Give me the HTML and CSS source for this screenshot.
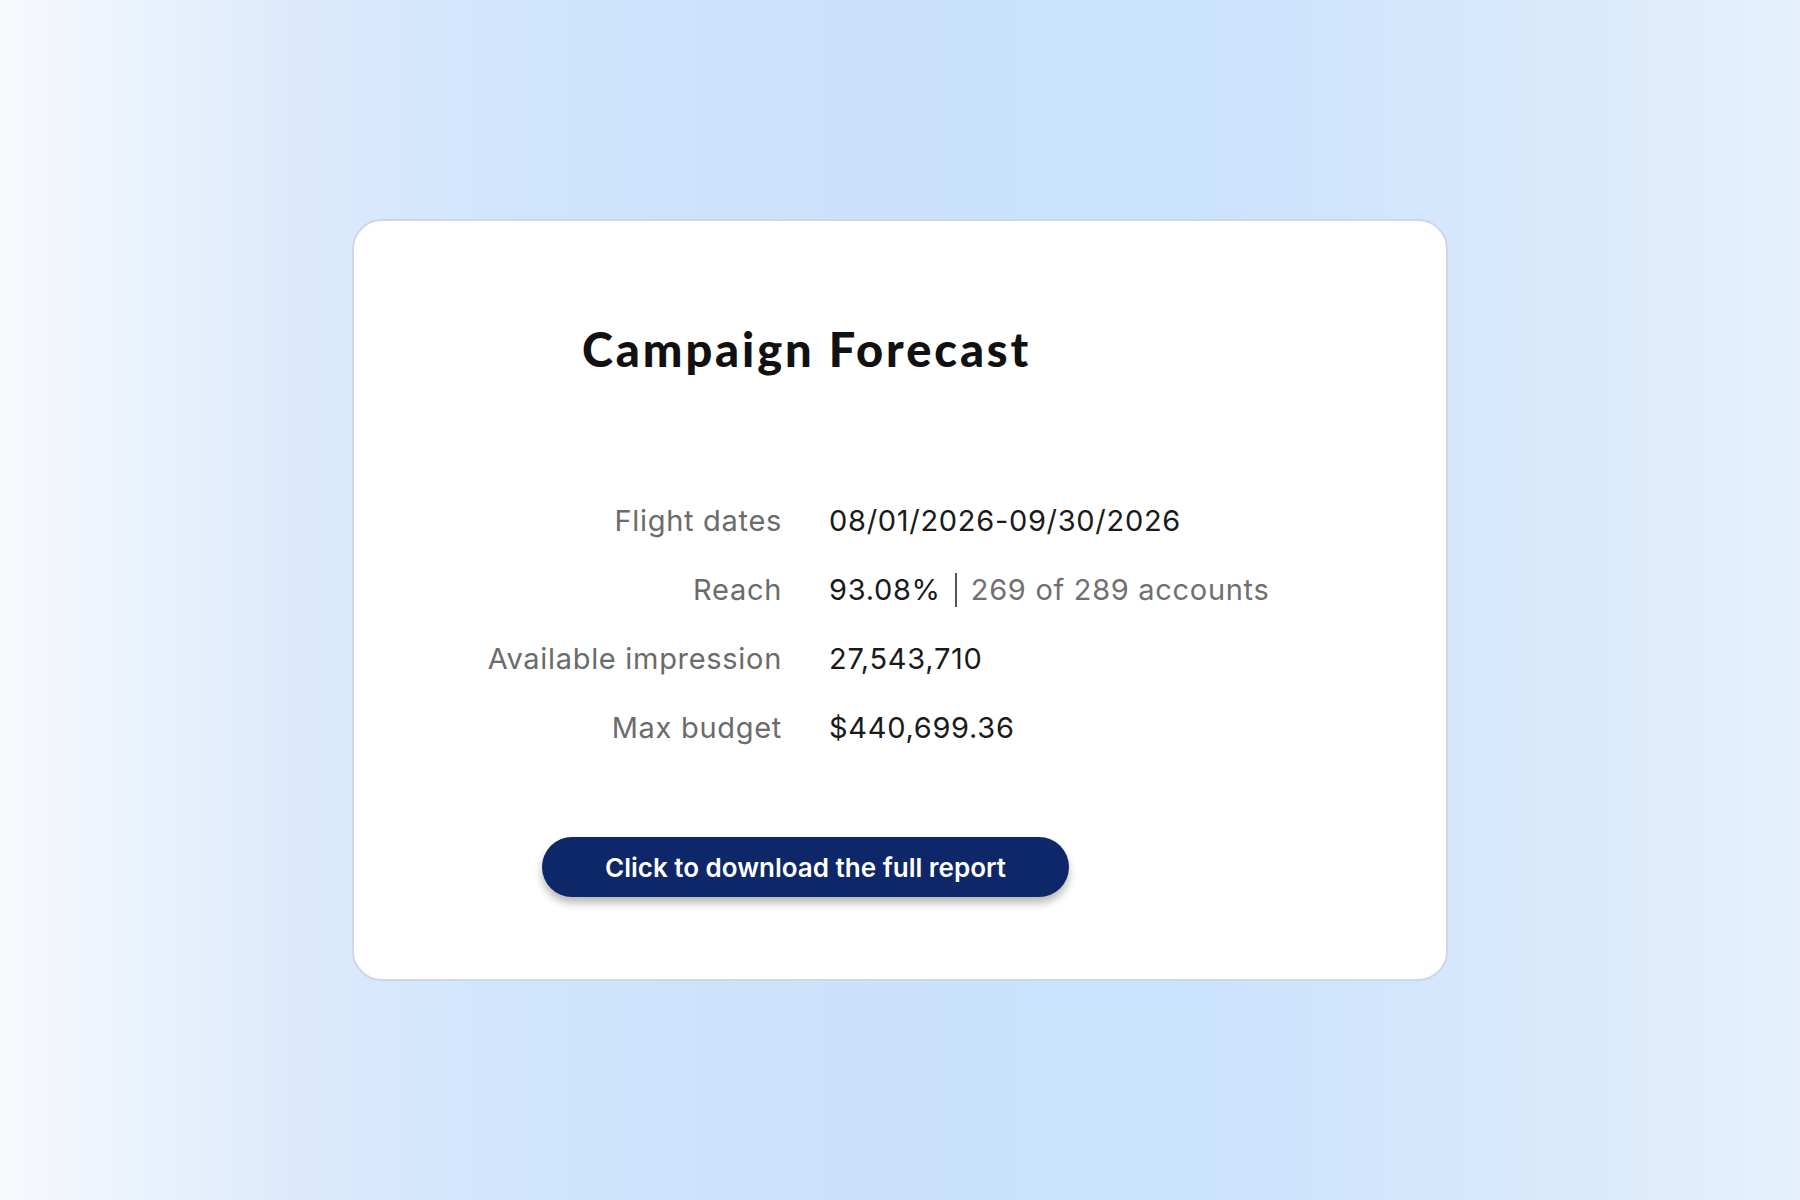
FILE: index.html
```html
<!DOCTYPE html>
<html lang="en">
<head>
    <meta charset="UTF-8">
    <meta name="viewport" content="width=device-width, initial-scale=1.0">
    <title>Campaign Forecast</title>
    <link rel="stylesheet" href="styles.css">
</head>
<body>
    <div class="card">
        <h1 class="card-title">Campaign Forecast</h1>

        <div class="details">
            <span class="label">Flight dates</span>
            <span class="value">08/01/2026-09/30/2026</span>

            <span class="label">Reach</span>
            <span class="value">93.08% <span class="divider"></span> <span class="muted">269 of 289 accounts</span></span>

            <span class="label">Available impression</span>
            <span class="value">27,543,710</span>

            <span class="label">Max budget</span>
            <span class="value">$440,699.36</span>
        </div>

        <button class="download-btn" type="button">Click to download the full report</button>
    </div>
</body>
</html>
```

FILE: styles.css
```css
body {
    margin: 0;
    min-height: 100vh;
    display: flex;
    align-items: center;
    justify-content: center;
    font-family: 'Inter', 'Noto Sans', sans-serif;
    background: linear-gradient(90deg, #f7f9fd 0%, #eaf2fc 8%, #dce9fb 17%, #d1e6fd 27%, #c9e1fa 48%, #cae3fd 66%, #d4e7fc 80%, #deecfb 92%, #e6f1fd 100%);
    color: #1a1a1a;
}

.card {
    box-sizing: border-box;
    width: 1096px;
    background-color: #fff;
    border: 2px solid #cfd7e4;
    border-radius: 30px;
    padding: 100px 0 82px;
}

.card-title {
    margin: 0 0 109px 228px;
    font-family: 'Lato', sans-serif;
    font-weight: 900;
    font-size: 47px;
    line-height: 56px;
    color: #111;
    letter-spacing: 2.9px;
}

.details {
    display: grid;
    grid-template-columns: 428px auto;
    column-gap: 47px;
    font-size: 29px;
    letter-spacing: 0.7px;
}

.label,
.value {
    line-height: 69px;
}

.label {
    text-align: right;
    color: #6b6b6b;
}

.value {
    color: #1a1a1a;
    display: flex;
    align-items: center;
    gap: 14px;
}

.divider {
    width: 2px;
    height: 34px;
    background-color: #555;
}

.muted {
    color: #707070;
}

.download-btn {
    display: block;
    margin: 75px 0 0 188px;
    width: 527px;
    height: 60px;
    border: none;
    border-radius: 30px;
    background-color: #0e2768;
    color: #fff;
    font-family: 'Inter', sans-serif;
    font-weight: 600;
    font-size: 26px;
    box-shadow: 0 6px 8px rgba(0, 0, 0, 0.28);
    cursor: pointer;
}
```
